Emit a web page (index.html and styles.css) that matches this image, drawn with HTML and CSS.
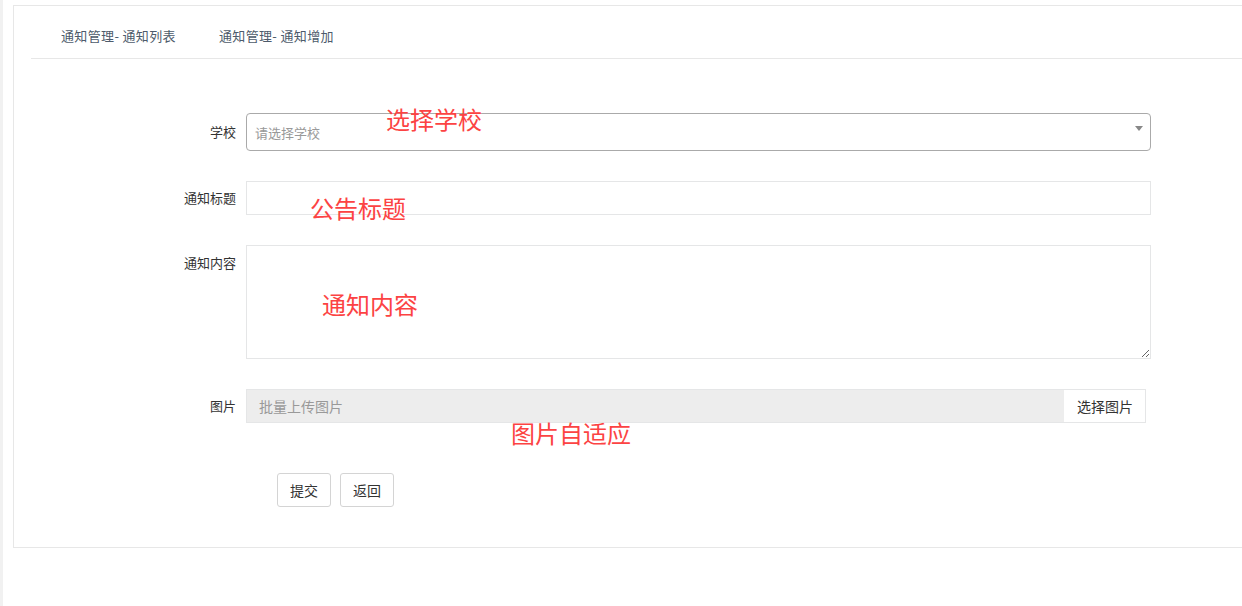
FILE: index.html
```html
<!DOCTYPE html>
<html lang="zh-CN">
<head>
    <meta charset="UTF-8">
    <meta name="viewport" content="width=device-width, initial-scale=1.0">
    <title>通知管理 - 通知增加</title>
    <link rel="stylesheet" href="styles.css">
</head>
<body>
    <div class="panel">
        <div class="tabs">
            <a class="tab" href="#">通知管理- 通知列表</a>
            <a class="tab" href="#">通知管理- 通知增加</a>
        </div>

        <form class="form" onsubmit="return false">
            <label class="label">学校</label>
            <div class="select">
                <span class="placeholder">请选择学校</span>
                <span class="caret"></span>
            </div>

            <label class="label">通知标题</label>
            <input class="input" type="text">

            <label class="label label-top">通知内容</label>
            <textarea class="textarea"></textarea>

            <label class="label">图片</label>
            <div class="file">
                <span class="file-name">批量上传图片</span>
                <span class="file-btn">选择图片</span>
            </div>

            <span></span>
            <div class="actions">
                <button class="btn" type="submit">提交</button>
                <button class="btn" type="button">返回</button>
            </div>
        </form>

        <!-- 标注 -->
        <span class="note note-school">选择学校</span>
        <span class="note note-title">公告标题</span>
        <span class="note note-content">通知内容</span>
        <span class="note note-image">图片自适应</span>
    </div>
</body>
</html>
```

FILE: styles.css
```css
html, body {
    overflow: hidden;
}
body {
    margin: 0;
    height: 606px;
    border-left: 3px solid #f1f1f1;
    background-color: #fff;
    font-family: "Noto Sans CJK SC", "Noto Sans", sans-serif;
    font-size: 13px;
    color: #333;
}
.panel {
    position: relative;
    margin: 5px 0 0 10px;
    border: 1px solid #e7e7e7;
    border-right: none;
    padding-bottom: 40px;
}
.tabs {
    display: flex;
    gap: 43px;
    margin-left: 17px;
    padding: 20px 0 12px 30px;
    border-bottom: 1px solid #e7e7e7;
}
.tab {
    line-height: 20px;
    letter-spacing: 0.35px;
    color: #4d5b6b;
    text-decoration: none;
}
.form {
    display: grid;
    grid-template-columns: 222px 905px;
    column-gap: 10px;
    row-gap: 30px;
    margin-top: 54px;
}
.label {
    align-self: center;
    text-align: right;
    line-height: 20px;
    color: #333;
}
.label-top {
    align-self: start;
    padding-top: 8px;
}
.select {
    display: flex;
    align-items: center;
    justify-content: space-between;
    height: 36px;
    padding: 0 8px;
    border: 1px solid #aaa;
    border-radius: 4px;
}
.placeholder {
    color: #999;
}
.caret {
    width: 0;
    height: 0;
    border-left: 4px solid transparent;
    border-right: 4px solid transparent;
    border-top: 5px solid #888;
    margin-top: -8px;
    margin-right: -1px;
}
.input {
    height: 34px;
    box-sizing: border-box;
    margin: 0;
    border: 1px solid #e5e6e7;
    outline: none;
    font: inherit;
}
.textarea {
    height: 114px;
    box-sizing: border-box;
    margin: 0;
    border: 1px solid #e5e6e7;
    outline: none;
    resize: vertical;
    font: inherit;
}
.file {
    display: flex;
    width: 900px;
    height: 34px;
    box-sizing: border-box;
    border: 1px solid #e5e6e7;
    font-size: 14px;
}
.file-name {
    flex: 1;
    display: flex;
    align-items: center;
    padding-left: 12px;
    background-color: #ededed;
    color: #999;
}
.file-btn {
    display: flex;
    align-items: center;
    padding: 0 12px 0 13px;
    background-color: #fff;
    color: #333;
}
.actions {
    display: flex;
    gap: 9px;
    margin-top: 20px;
    padding-left: 31px;
}
.btn {
    width: 54px;
    height: 34px;
    border: 1px solid #d4d4d4;
    border-radius: 3px;
    background-color: #fff;
    font: inherit;
    font-size: 14px;
    color: #333;
    cursor: pointer;
}
.note {
    position: absolute;
    font-size: 24px;
    line-height: 24px;
    color: #fc4343;
    white-space: nowrap;
}
.note-school {
    left: 372px;
    top: 101px;
}
.note-title {
    left: 296px;
    top: 190px;
}
.note-content {
    left: 308px;
    top: 286px;
}
.note-image {
    left: 497px;
    top: 415px;
}
```
